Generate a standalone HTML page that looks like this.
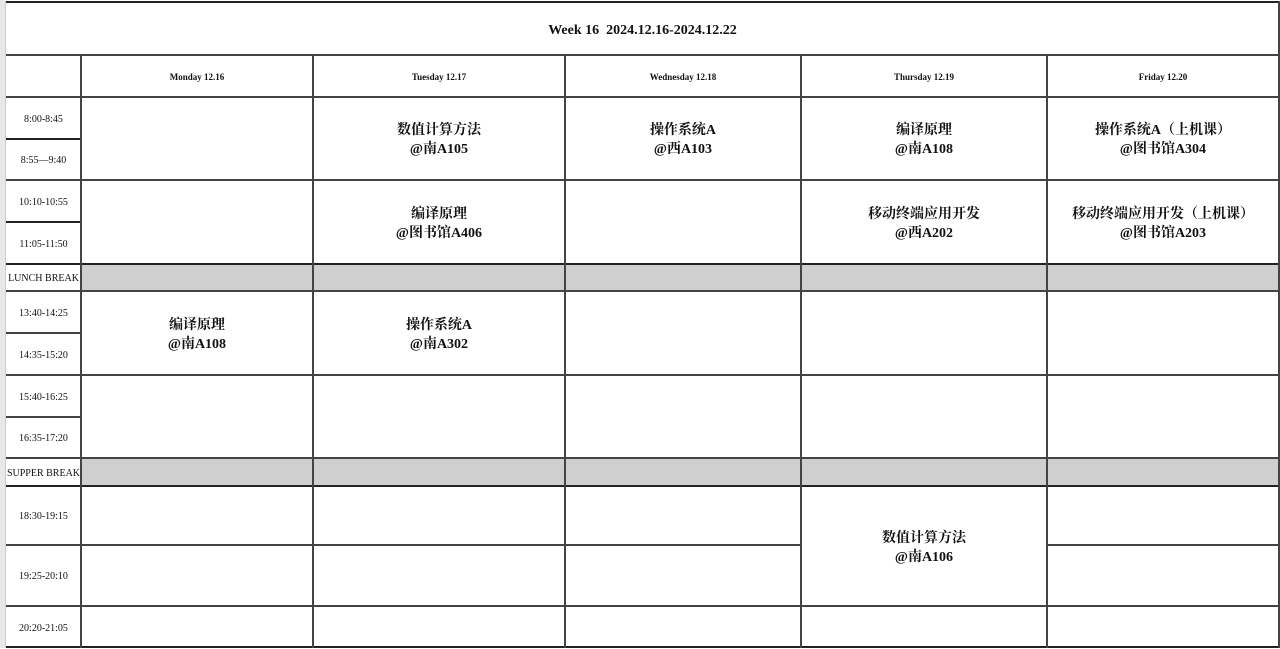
<!DOCTYPE html>
<html><head><meta charset="utf-8"><style>
body{margin:0;width:1280px;height:648px;background:#fff;position:relative;overflow:hidden;font-family:"Liberation Serif","Noto Serif CJK SC",serif;color:#111}
.h,.v{position:absolute;background:#444}
.h{height:2px}.v{width:2px}
.g{position:absolute;background:#d0cfcf}
.t{position:absolute;text-align:center;display:flex;align-items:center;justify-content:center}
.tm{font-size:10px;left:6px;width:75px}
.hd{font-size:9px;font-weight:bold;top:56px;height:42px}
.c{font-family:"Liberation Serif","Noto Serif CJK SC",serif;font-weight:bold;font-size:14px;line-height:19px;padding-top:3px;box-sizing:border-box}
</style></head><body>
<div style="position:absolute;left:0;top:0;width:5px;height:648px;background:#e8e8e8"></div>
<div class="g" style="left:81px;top:264px;width:1198px;height:27px"></div>
<div class="g" style="left:81px;top:458px;width:1198px;height:28px"></div>
<div class="h" style="left:6px;top:1px;width:1273px;background:#222"></div>
<div class="h" style="left:6px;top:54px;width:1273px"></div>
<div class="h" style="left:6px;top:96px;width:1273px"></div>
<div class="h" style="left:6px;top:179px;width:1273px"></div>
<div class="h" style="left:6px;top:263px;width:1273px;background:#222"></div>
<div class="h" style="left:6px;top:290px;width:1273px"></div>
<div class="h" style="left:6px;top:374px;width:1273px"></div>
<div class="h" style="left:6px;top:457px;width:1273px"></div>
<div class="h" style="left:6px;top:485px;width:1273px;background:#222"></div>
<div class="h" style="left:6px;top:605px;width:1273px"></div>
<div class="h" style="left:6px;top:646px;width:1273px;background:#222"></div>
<div class="h" style="left:6px;top:138px;width:75px;background:#222"></div>
<div class="h" style="left:6px;top:221px;width:75px;background:#222"></div>
<div class="h" style="left:6px;top:332px;width:75px"></div>
<div class="h" style="left:6px;top:416px;width:75px"></div>
<div class="h" style="left:6px;top:544px;width:795px"></div>
<div class="h" style="left:1047px;top:544px;width:232px"></div>
<div class="v" style="left:5px;top:1px;height:647px;width:1px;background:#ccc"></div>
<div class="v" style="left:80px;top:54px;height:594px"></div>
<div class="v" style="left:312px;top:54px;height:594px"></div>
<div class="v" style="left:564px;top:54px;height:594px"></div>
<div class="v" style="left:800px;top:54px;height:594px"></div>
<div class="v" style="left:1046px;top:54px;height:594px"></div>
<div class="v" style="left:1278px;top:1px;height:647px"></div>
<div class="t" style="left:6px;width:1273px;top:5px;height:52px;font-size:14px;font-weight:bold">Week 16&nbsp; 2024.12.16-2024.12.22</div>
<div class="t hd" style="left:81px;width:232px">Monday 12.16</div>
<div class="t hd" style="left:313px;width:252px">Tuesday 12.17</div>
<div class="t hd" style="left:565px;width:236px">Wednesday 12.18</div>
<div class="t hd" style="left:801px;width:246px">Thursday 12.19</div>
<div class="t hd" style="left:1047px;width:232px">Friday 12.20</div>
<div class="t tm" style="top:98px;height:42px">8:00-8:45</div>
<div class="t tm" style="top:140px;height:41px">8:55—9:40</div>
<div class="t tm" style="top:181px;height:42px">10:10-10:55</div>
<div class="t tm" style="top:223px;height:42px">11:05-11:50</div>
<div class="t tm" style="top:265px;height:27px">LUNCH BREAK</div>
<div class="t tm" style="top:292px;height:42px">13:40-14:25</div>
<div class="t tm" style="top:334px;height:42px">14:35-15:20</div>
<div class="t tm" style="top:376px;height:42px">15:40-16:25</div>
<div class="t tm" style="top:418px;height:41px">16:35-17:20</div>
<div class="t tm" style="top:459px;height:28px">SUPPER BREAK</div>
<div class="t tm" style="top:487px;height:59px">18:30-19:15</div>
<div class="t tm" style="top:546px;height:61px">19:25-20:10</div>
<div class="t tm" style="top:607px;height:42px">20:20-21:05</div>
<div class="t c" style="left:313px;width:252px;top:97px;height:83px">数值计算方法<br>@南A105</div>
<div class="t c" style="left:565px;width:236px;top:97px;height:83px">操作系统A<br>@西A103</div>
<div class="t c" style="left:801px;width:246px;top:97px;height:83px">编译原理<br>@南A108</div>
<div class="t c" style="left:1047px;width:232px;top:97px;height:83px">操作系统A（上机课）<br>@图书馆A304</div>
<div class="t c" style="left:313px;width:252px;top:180px;height:84px">编译原理<br>@图书馆A406</div>
<div class="t c" style="left:801px;width:246px;top:180px;height:84px">移动终端应用开发<br>@西A202</div>
<div class="t c" style="left:1047px;width:232px;top:180px;height:84px">移动终端应用开发（上机课）<br>@图书馆A203</div>
<div class="t c" style="left:81px;width:232px;top:291px;height:84px">编译原理<br>@南A108</div>
<div class="t c" style="left:313px;width:252px;top:291px;height:84px">操作系统A<br>@南A302</div>
<div class="t c" style="left:801px;width:246px;top:486px;height:120px">数值计算方法<br>@南A106</div>
</body></html>
